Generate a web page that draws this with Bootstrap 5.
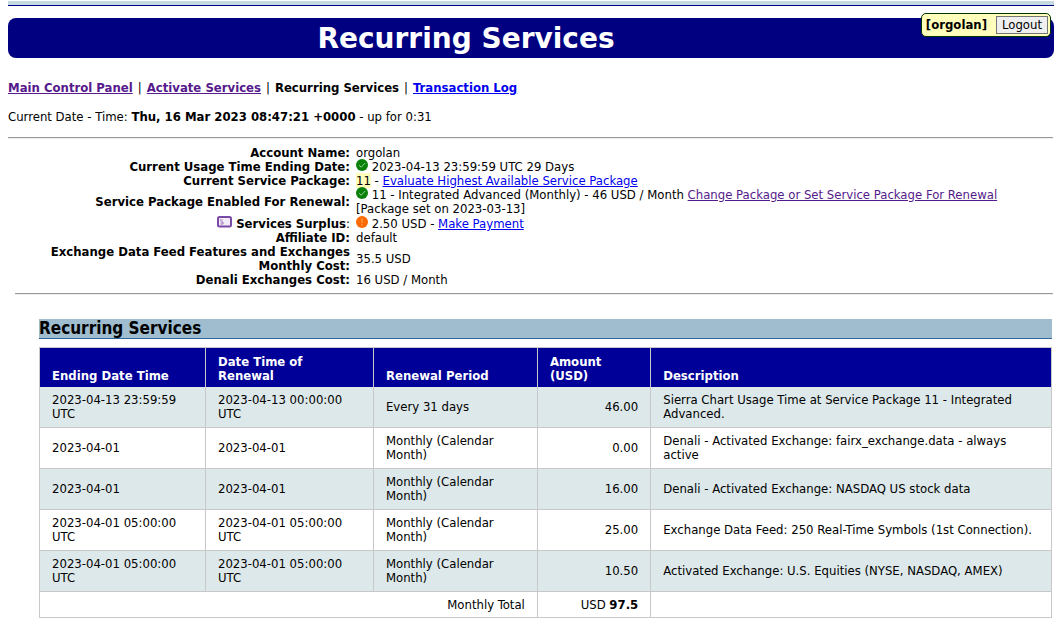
<!DOCTYPE html>
<html lang="en">
<head>
<meta charset="utf-8">
<meta name="viewport" content="width=device-width, initial-scale=1">
<title>Recurring Services</title>
<link href="https://cdn.jsdelivr.net/npm/bootstrap@5.3.0/dist/css/bootstrap.min.css" rel="stylesheet">
<style>
  body {
    font-family: "DejaVu Sans Condensed", Tahoma, Verdana, sans-serif;
    font-size: 13px;
    line-height: 14px;
    color: #000;
    background: #fff;
    padding: 1px 5px 16px 8px;
  }
  a { color: #0000ee; }
  a.seen { color: #551a8b; }
  .top-strip { height: 5px; background: #c4dae1; border-bottom: 1px solid #000080; }
  .title-band { margin-top: 12px; height: 40px; border-radius: 8px; background: #000080; padding-right: 130px; }
  .title-band h1 {
    font-family: "DejaVu Sans", Verdana, sans-serif;
    font-size: 28px; line-height: 42px; font-weight: 700; color: #fff;
  }
  .user-box {
    top: -5px; right: 3px; height: 24px; gap: 9px; padding: 0 2px 0 4px;
    border: 1px solid #003300; border-radius: 5px; background: #ffffbb;
  }
  .user-box button {
    height: 18px; padding: 0 5px; line-height: 14px;
    color: #000; background: #efefef; border: 1px solid #767676; border-radius: 0;
  }
  .page-links { margin-top: 23px; gap: 5px; }
  .clock { margin-top: 15px; }
  hr { margin: 0; height: 2px; border: 0; opacity: 1; background: linear-gradient(#9a9a9a 50%, #eeeeee 50%); }
  .rule-top { margin: 13px 1px 7px 0; }
  .rule-bottom { margin-top: 6px; }
  .account { margin: 0 1px 0 7px; }
  .account table { width: 100%; table-layout: fixed; }
  .account th { width: 336px; text-align: right; padding: 0 1px 0 0; }
  .account td { padding: 0 0 0 5px; }
  .account .surplus > * { padding-top: 1px; }
  .status, .card-icon { height: 12px; margin-top: -2px; vertical-align: baseline; }
  .status { width: 12px; }
  .card-icon { width: 15px; }
  .hilite { background: #ffffbb; }
  .services { margin: 24px 2px 0 31px; }
  .services h2 {
    font-size: 17px; line-height: 19px; font-weight: 700;
    margin-bottom: 8px; background: #9fbdcf; border-bottom: 1px solid #336699;
  }
  .grid-table { width: 100%; table-layout: fixed; border-collapse: collapse; }
  .grid-table th, .grid-table td { border: 1px solid #c8c8c8; padding: 6px 12px; vertical-align: middle; }
  .grid-table thead th { background: #000099; color: #fff; vertical-align: bottom; border-bottom: 0; padding: 7px 12px 4px; }
  .grid-table tbody tr:first-child td { border-top: 0; }
  .grid-table tbody tr:nth-child(odd) td { background: #dde8ea; }
  .grid-table tfoot td { padding-bottom: 5px; }
</style>
</head>
<body>
  <div class="top-strip"></div>

  <header class="title-band position-relative">
    <h1 class="m-0 text-center">Recurring Services</h1>
    <form class="user-box position-absolute d-flex align-items-center">
      <b>[orgolan]</b>
      <button type="button">Logout</button>
    </form>
  </header>

  <nav class="page-links d-flex flex-wrap">
    <a class="seen fw-bold" href="#">Main Control Panel</a> <span>|</span>
    <a class="seen fw-bold" href="#">Activate Services</a> <span>|</span>
    <b>Recurring Services</b> <span>|</span>
    <a class="fw-bold" href="#">Transaction Log</a>
  </nav>

  <p class="clock mb-0">Current Date - Time: <b>Thu, 16 Mar 2023 08:47:21 +0000</b> - up for 0:31</p>

  <hr class="rule-top">

  <svg class="d-none">
    <symbol id="ok" viewBox="0 0 12 12">
      <circle cx="6" cy="6" r="6" fill="#0a820a"/>
      <path d="M3 6.2 5.2 8.2 9.2 4" fill="none" stroke="#b5dcb5" stroke-width=".8"/>
    </symbol>
    <symbol id="warn" viewBox="0 0 12 12">
      <circle cx="6" cy="6" r="6" fill="#ff6a00"/>
      <path d="M6 2.5V7M6 8.2V9.5" fill="none" stroke="#ffa25c" stroke-width="1.2"/>
    </symbol>
  </svg>

  <section class="account">
    <table>
      <tr><th scope="row">Account Name:</th><td>orgolan</td></tr>
      <tr><th scope="row">Current Usage Time Ending Date:</th><td><svg class="status"><use href="#ok"/></svg> 2023-04-13 23:59:59 UTC 29 Days</td></tr>
      <tr><th scope="row">Current Service Package:</th><td><span class="hilite">11</span> - <a href="#">Evaluate Highest Available Service Package</a></td></tr>
      <tr><th scope="row">Service Package Enabled For Renewal:</th><td><svg class="status"><use href="#ok"/></svg> 11 - Integrated Advanced (Monthly) - 46 USD / Month <a class="seen" href="#">Change Package or Set Service Package For Renewal</a><br>[Package set on 2023-03-13]</td></tr>
      <tr class="surplus">
        <th scope="row">
          <svg class="card-icon" viewBox="0 0 15 12">
            <rect x="1" y="1" width="13" height="9.6" rx="1.5" fill="#f3eaf9" stroke="#7a4ba6" stroke-width="2"/>
            <path d="M3 4H5.5M3.500 6H6V8H3.5" fill="none" stroke="#9b78bd"/>
          </svg>
          Services Surplus<span class="fw-normal">:</span></th>
        <td><svg class="status"><use href="#warn"/></svg> 2.50 USD - <a href="#">Make Payment</a></td>
      </tr>
      <tr><th scope="row">Affiliate ID:</th><td>default</td></tr>
      <tr><th scope="row">Exchange Data Feed Features and Exchanges Monthly Cost:</th><td>35.5 USD</td></tr>
      <tr><th scope="row">Denali Exchanges Cost:</th><td>16 USD / Month</td></tr>
    </table>
    <hr class="rule-bottom">
  </section>

  <section class="services">
    <h2 class="mt-0">Recurring Services</h2>
    <table class="grid-table">
      <colgroup>
        <col style="width:16.4%"><col style="width:16.6%"><col style="width:16.2%"><col style="width:11.2%"><col style="width:39.6%">
      </colgroup>
      <thead>
        <tr><th scope="col">Ending Date Time</th><th scope="col">Date Time of Renewal</th><th scope="col">Renewal Period</th><th scope="col">Amount (USD)</th><th scope="col">Description</th></tr>
      </thead>
      <tbody>
        <tr><td>2023-04-13 23:59:59 UTC</td><td>2023-04-13 00:00:00 UTC</td><td>Every 31 days</td><td class="text-end">46.00</td><td>Sierra Chart Usage Time at Service Package 11 - Integrated Advanced.</td></tr>
        <tr><td>2023-04-01</td><td>2023-04-01</td><td>Monthly (Calendar Month)</td><td class="text-end">0.00</td><td>Denali - Activated Exchange: fairx_exchange.data - always active</td></tr>
        <tr><td>2023-04-01</td><td>2023-04-01</td><td>Monthly (Calendar Month)</td><td class="text-end">16.00</td><td>Denali - Activated Exchange: NASDAQ US stock data</td></tr>
        <tr><td>2023-04-01 05:00:00 UTC</td><td>2023-04-01 05:00:00 UTC</td><td>Monthly (Calendar Month)</td><td class="text-end">25.00</td><td>Exchange Data Feed: 250 Real-Time Symbols (1st Connection).</td></tr>
        <tr><td>2023-04-01 05:00:00 UTC</td><td>2023-04-01 05:00:00 UTC</td><td>Monthly (Calendar Month)</td><td class="text-end">10.50</td><td>Activated Exchange: U.S. Equities (NYSE, NASDAQ, AMEX)</td></tr>
      </tbody>
      <tfoot>
        <tr><td colspan="3" class="text-end">Monthly Total</td><td class="text-end">USD <b>97.5</b></td><td></td></tr>
      </tfoot>
    </table>
  </section>
<script src="https://cdn.jsdelivr.net/npm/bootstrap@5.3.0/dist/js/bootstrap.bundle.min.js"></script>
</body>
</html>
